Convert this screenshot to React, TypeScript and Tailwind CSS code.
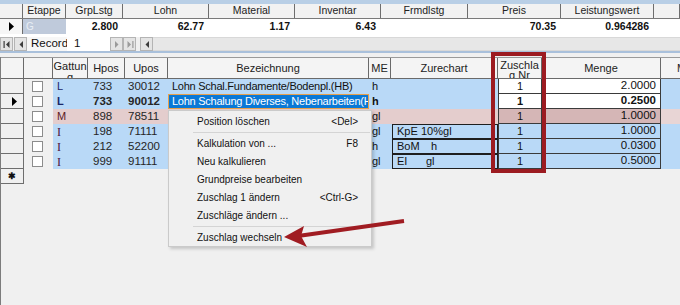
import React from "react";

const TOP_COLS = [
  { label: "Etappe", w: 43, v: "" },
  { label: "GrpLstg", w: 57, v: "2.800" },
  { label: "Lohn", w: 86, v: "62.77" },
  { label: "Material", w: 86, v: "1.17" },
  { label: "Inventar", w: 86, v: "6.43" },
  { label: "Frmdlstg", w: 87, v: "" },
  { label: "Preis", w: 93, v: "70.35" },
  { label: "Leistungswert", w: 93, v: "0.964286" },
  { label: "", w: 26, v: "" },
];

type Row = {
  g: string;
  h: string;
  u: string;
  bez: string;
  me: string;
  zur?: [string, string, number];
  m: string;
  tone: "blue" | "pink";
  bold?: boolean;
  sel?: boolean;
};

const ROWS: Row[] = [
  { g: "L", h: "733", u: "30012", bez: "Lohn Schal.Fundamente/Bodenpl.(HB)", me: "h", m: "2.0000", tone: "blue" },
  { g: "L", h: "733", u: "90012", bez: "Lohn Schalung Diverses, Nebenarbeiten(HB", me: "h", m: "0.2500", tone: "blue", bold: true, sel: true },
  { g: "M", h: "898", u: "78511", bez: "", me: "gl", m: "1.0000", tone: "pink" },
  { g: "I", h: "198", u: "71111", bez: "", me: "gl", zur: ["KpE", "10%gl", 24], m: "1.0000", tone: "blue" },
  { g: "I", h: "212", u: "52200", bez: "", me: "h", zur: ["BoM", "h", 34], m: "0.0300", tone: "blue" },
  { g: "I", h: "999", u: "91111", bez: "", me: "gl", zur: ["EI", "gl", 29], m: "0.5000", tone: "blue" },
];

const G_COLOR: Record<string, string> = {
  L: "text-[#1b2767]",
  M: "text-[#5c1b26]",
  I: "text-[#4a1240]",
};

function Tri({ className = "" }: { className?: string }) {
  return (
    <svg width="5" height="9" viewBox="0 0 5 9" className={className}>
      <path d="M0 0 L5 4.5 L0 9 Z" fill="#000" />
    </svg>
  );
}

function NavBtn({ dir, bar, dim }: { dir: "l" | "r"; bar?: boolean; dim?: boolean }) {
  const c = dim ? "#9a9a9a" : "#3c3c3c";
  return (
    <div className="w-[13px] h-[14px] flex items-center justify-center bg-[#e4e4e4] border border-[#b4b4b4]">
      <svg width="8" height="7" viewBox="0 0 8 7">
        {dir === "l" ? (
          <>
            {bar && <rect x="0.5" y="0" width="1.2" height="7" fill={c} />}
            <path d={bar ? "M6.5 0 L3 3.5 L6.5 7 Z" : "M6 0 L2.5 3.5 L6 7 Z"} fill={c} />
          </>
        ) : (
          <>
            <path d={bar ? "M1.5 0 L5 3.5 L1.5 7 Z" : "M2 0 L5.5 3.5 L2 7 Z"} fill={c} />
            {bar && <rect x="6.3" y="0" width="1.2" height="7" fill={c} />}
          </>
        )}
      </svg>
    </div>
  );
}

function Check() {
  return <div className="w-[11px] h-[11px] bg-white border border-[#8c8c8c]" />;
}

function MenuItem({ label, keyText }: { label: string; keyText?: string }) {
  return (
    <div className="h-[18px] flex items-center justify-between pl-[28px] pr-[13px] text-[10px] text-[#111]">
      <span>{label}</span>
      {keyText && <span>{keyText}</span>}
    </div>
  );
}

export default function App() {
  return (
    <div className="relative w-[680px] h-[305px] overflow-hidden bg-[#f0f0f0] font-['Liberation_Sans',Arial,sans-serif] text-[11px] text-[#111]">
      {/* upper grid */}
      <div className="h-[4px] bg-[#b9cfe6]" />
      <div className="flex h-[15px] bg-[#f2f2f2] border-b border-[#7a7a7a]">
        <div className="w-[23px] shrink-0 border-r border-[#6e6e6e]" />
        {TOP_COLS.map((c, i) => (
          <div
            key={i}
            style={{ width: c.w }}
            className="shrink-0 border-r border-[#6e6e6e] flex items-center justify-center text-[10.5px] text-[#222] overflow-hidden whitespace-nowrap"
          >
            {c.label}
          </div>
        ))}
      </div>
      <div className="flex h-[15px] bg-white">
        <div className="w-[23px] shrink-0 flex items-center pl-[9px] border-r border-[#6e6e6e] bg-[#f6f6f6]">
          <Tri />
        </div>
        {TOP_COLS.map((c, i) =>
          i === 0 ? (
            <div key={i} style={{ width: c.w }} className="shrink-0 bg-[#bfcadb] text-[#e9eef5] pl-[3px] flex items-center text-[10px]">
              G
            </div>
          ) : (
            <div key={i} style={{ width: c.w }} className="shrink-0 flex items-center justify-end pr-[5px] font-bold text-[10.5px]">
              {c.v}
            </div>
          )
        )}
      </div>
      <div className="h-[3px] bg-white" />
      {/* record navigator */}
      <div className="flex h-[14px] items-stretch">
        <NavBtn dir="l" bar />
        <div className="w-[1px]" />
        <NavBtn dir="l" />
        <div className="w-[40px] bg-[#f7f7f7] pl-[4px] flex items-center text-[11.5px]">Record</div>
        <div className="w-[43px] bg-white pl-[7px] flex items-center text-[11.5px]">1</div>
        <NavBtn dir="r" dim />
        <NavBtn dir="r" bar dim />
        <div className="w-[4px]" />
        <NavBtn dir="l" />
        <div className="flex-1 bg-[#e7e7e7] border-y border-[#d8d8d8]" />
      </div>
      <div className="h-[2px] bg-[#a9c0db]" />
      <div className="h-[4px]" />

      {/* lower grid */}
      <div className="h-[248px] border-l border-[#7c7c7c]">
        <div className="flex h-[22px] bg-[#f4f4f4] border-b border-[#6a6a6a] border-t border-t-[#9a9a9a] text-[#222]">
          <div className="w-[23px] shrink-0 border-r border-[#6a6a6a]" />
          <div className="w-[29px] shrink-0 border-r border-[#6a6a6a]" />
          <div className="w-[35px] shrink-0 border-r border-[#6a6a6a] overflow-hidden text-center leading-[11px] pt-[3px]">
            Gattun g
          </div>
          <div className="w-[37px] shrink-0 border-r border-[#6a6a6a] flex items-center justify-center">Hpos</div>
          <div className="w-[43px] shrink-0 border-r border-[#6a6a6a] flex items-center justify-center">Upos</div>
          <div className="w-[201px] shrink-0 border-r border-[#6a6a6a] flex items-center justify-center">Bezeichnung</div>
          <div className="w-[22px] shrink-0 border-r border-[#6a6a6a] flex items-center justify-center">ME</div>
          <div className="w-[107px] shrink-0 border-r border-[#6a6a6a] flex items-center justify-center">Zurechart</div>
          <div className="w-[44px] shrink-0 border-r border-[#6a6a6a] overflow-hidden text-center leading-[10px] pt-[2px] px-[2px] break-all">
            Zuschlag Nr
          </div>
          <div className="w-[119px] shrink-0 border-r border-[#6a6a6a] flex items-center justify-center">Menge</div>
          <div className="flex-1 overflow-hidden pl-[16px] flex items-center">M</div>
        </div>

        {ROWS.map((r, i) => {
          const bg = r.tone === "pink" ? "bg-[#e4cdcd]" : "bg-[#b9d9f7]";
          const cellBg = r.tone === "pink" ? "bg-[#d5b6b6]" : i < 2 ? "bg-white" : "bg-[#b9d9f7]";
          const restBg = r.tone === "pink" ? "bg-[#e8d5d5]" : "bg-[#b9d9f7]";
          const bold = r.bold ? "font-bold" : "";
          return (
            <div key={i} className="flex h-[15px]">
              <div className="w-[23px] shrink-0 border-r border-b border-[#6e6e6e] bg-[#f0f0f0] flex items-center pl-[11px]">
                {r.sel && <Tri />}
              </div>
              <div className="w-[29px] shrink-0 flex items-center pl-[8px]">
                <Check />
              </div>
              <div className={`w-[35px] shrink-0 ${bg} pl-[4px] flex items-center ${bold} ${G_COLOR[r.g]} font-['Liberation_Serif',serif] text-[12px]`}>
                {r.g === "I" ? "I" : <span className="font-['Liberation_Sans',Arial,sans-serif] text-[11px]">{r.g}</span>}
              </div>
              <div className={`w-[37px] shrink-0 ${bg} pl-[5px] flex items-center ${bold} text-[#262626] text-[11.5px]`}>{r.h}</div>
              <div className={`w-[43px] shrink-0 ${bg} pl-[3px] flex items-center ${bold} text-[#262626] text-[11.5px]`}>{r.u}</div>
              <div className={`w-[201px] shrink-0 ${bg} flex items-center whitespace-nowrap overflow-hidden tracking-[-0.25px]`}>
                {r.sel ? (
                  <div className="w-full h-full bg-[#0a78d6] border border-[#e6a04c] text-white pl-[3px] flex items-center overflow-hidden">
                    {r.bez}
                  </div>
                ) : (
                  <span className="pl-[4px]">{r.bez}</span>
                )}
              </div>
              <div className={`w-[22px] shrink-0 ${bg} pl-[3px] flex items-center ${bold}`}>{r.me}</div>
              <div className={`w-[107px] shrink-0 ${bg} flex items-stretch`}>
                {r.zur && (
                  <div className="flex-1 border border-[#1e1e1e] ml-[1px] flex items-center pl-[4px] whitespace-nowrap">
                    <span className="inline-block" style={{ width: r.zur[2] }}>
                      {r.zur[0]}
                    </span>
                    <span>{r.zur[1]}</span>
                  </div>
                )}
              </div>
              <div className={`w-[44px] shrink-0 ${cellBg} border-l border-b border-r border-[#3a3a3a] flex items-center justify-center ${bold}`}>
                1
              </div>
              <div className={`w-[119px] shrink-0 ${cellBg} border-b border-r border-[#3a3a3a] flex items-center justify-end pr-[4px] ${bold} text-[11.5px]`}>
                {r.m}
              </div>
              <div className={`flex-1 ${restBg}`} />
            </div>
          );
        })}
        <div className="flex h-[15px]">
          <div className="w-[23px] shrink-0 border-r border-b border-[#6e6e6e] bg-[#f0f0f0] flex items-center justify-center text-[9px] font-bold leading-none">
            ✱
          </div>
        </div>
      </div>

      {/* annotation box */}
      <div className="absolute left-[491px] top-[52px] w-[55px] h-[121px] border-[4px] border-[#9c1b21]" />

      {/* context menu */}
      <div className="absolute left-[168px] top-[110px] w-[204px] h-[137px] bg-[#f0f0f0] border border-[#cacaca] shadow-[2px_2px_3px_rgba(0,0,0,0.18)] pt-[1px]">
        <MenuItem label="Position löschen" keyText="<Del>" />
        <div className="h-[4px] flex items-center pl-[24px] pr-[1px]">
          <div className="h-[1px] w-full bg-[#d4d4d4]" />
        </div>
        <MenuItem label="Kalkulation von ..." keyText="F8" />
        <MenuItem label="Neu kalkulieren" />
        <MenuItem label="Grundpreise bearbeiten" />
        <MenuItem label="Zuschlag 1 ändern" keyText="<Ctrl-G>" />
        <MenuItem label="Zuschläge ändern ..." />
        <div className="h-[4px] flex items-center pl-[24px] pr-[1px]">
          <div className="h-[1px] w-full bg-[#d4d4d4]" />
        </div>
        <MenuItem label="Zuschlag wechseln" />
      </div>

      {/* arrow */}
      <svg className="absolute left-0 top-0 pointer-events-none" width="680" height="305" viewBox="0 0 680 305">
        <line x1="404" y1="221" x2="298" y2="236" stroke="#a01c22" strokeWidth="4" />
        <path d="M284 237 L304 226 L301 236 L307 247 Z" fill="#a01c22" />
      </svg>
    </div>
  );
}
